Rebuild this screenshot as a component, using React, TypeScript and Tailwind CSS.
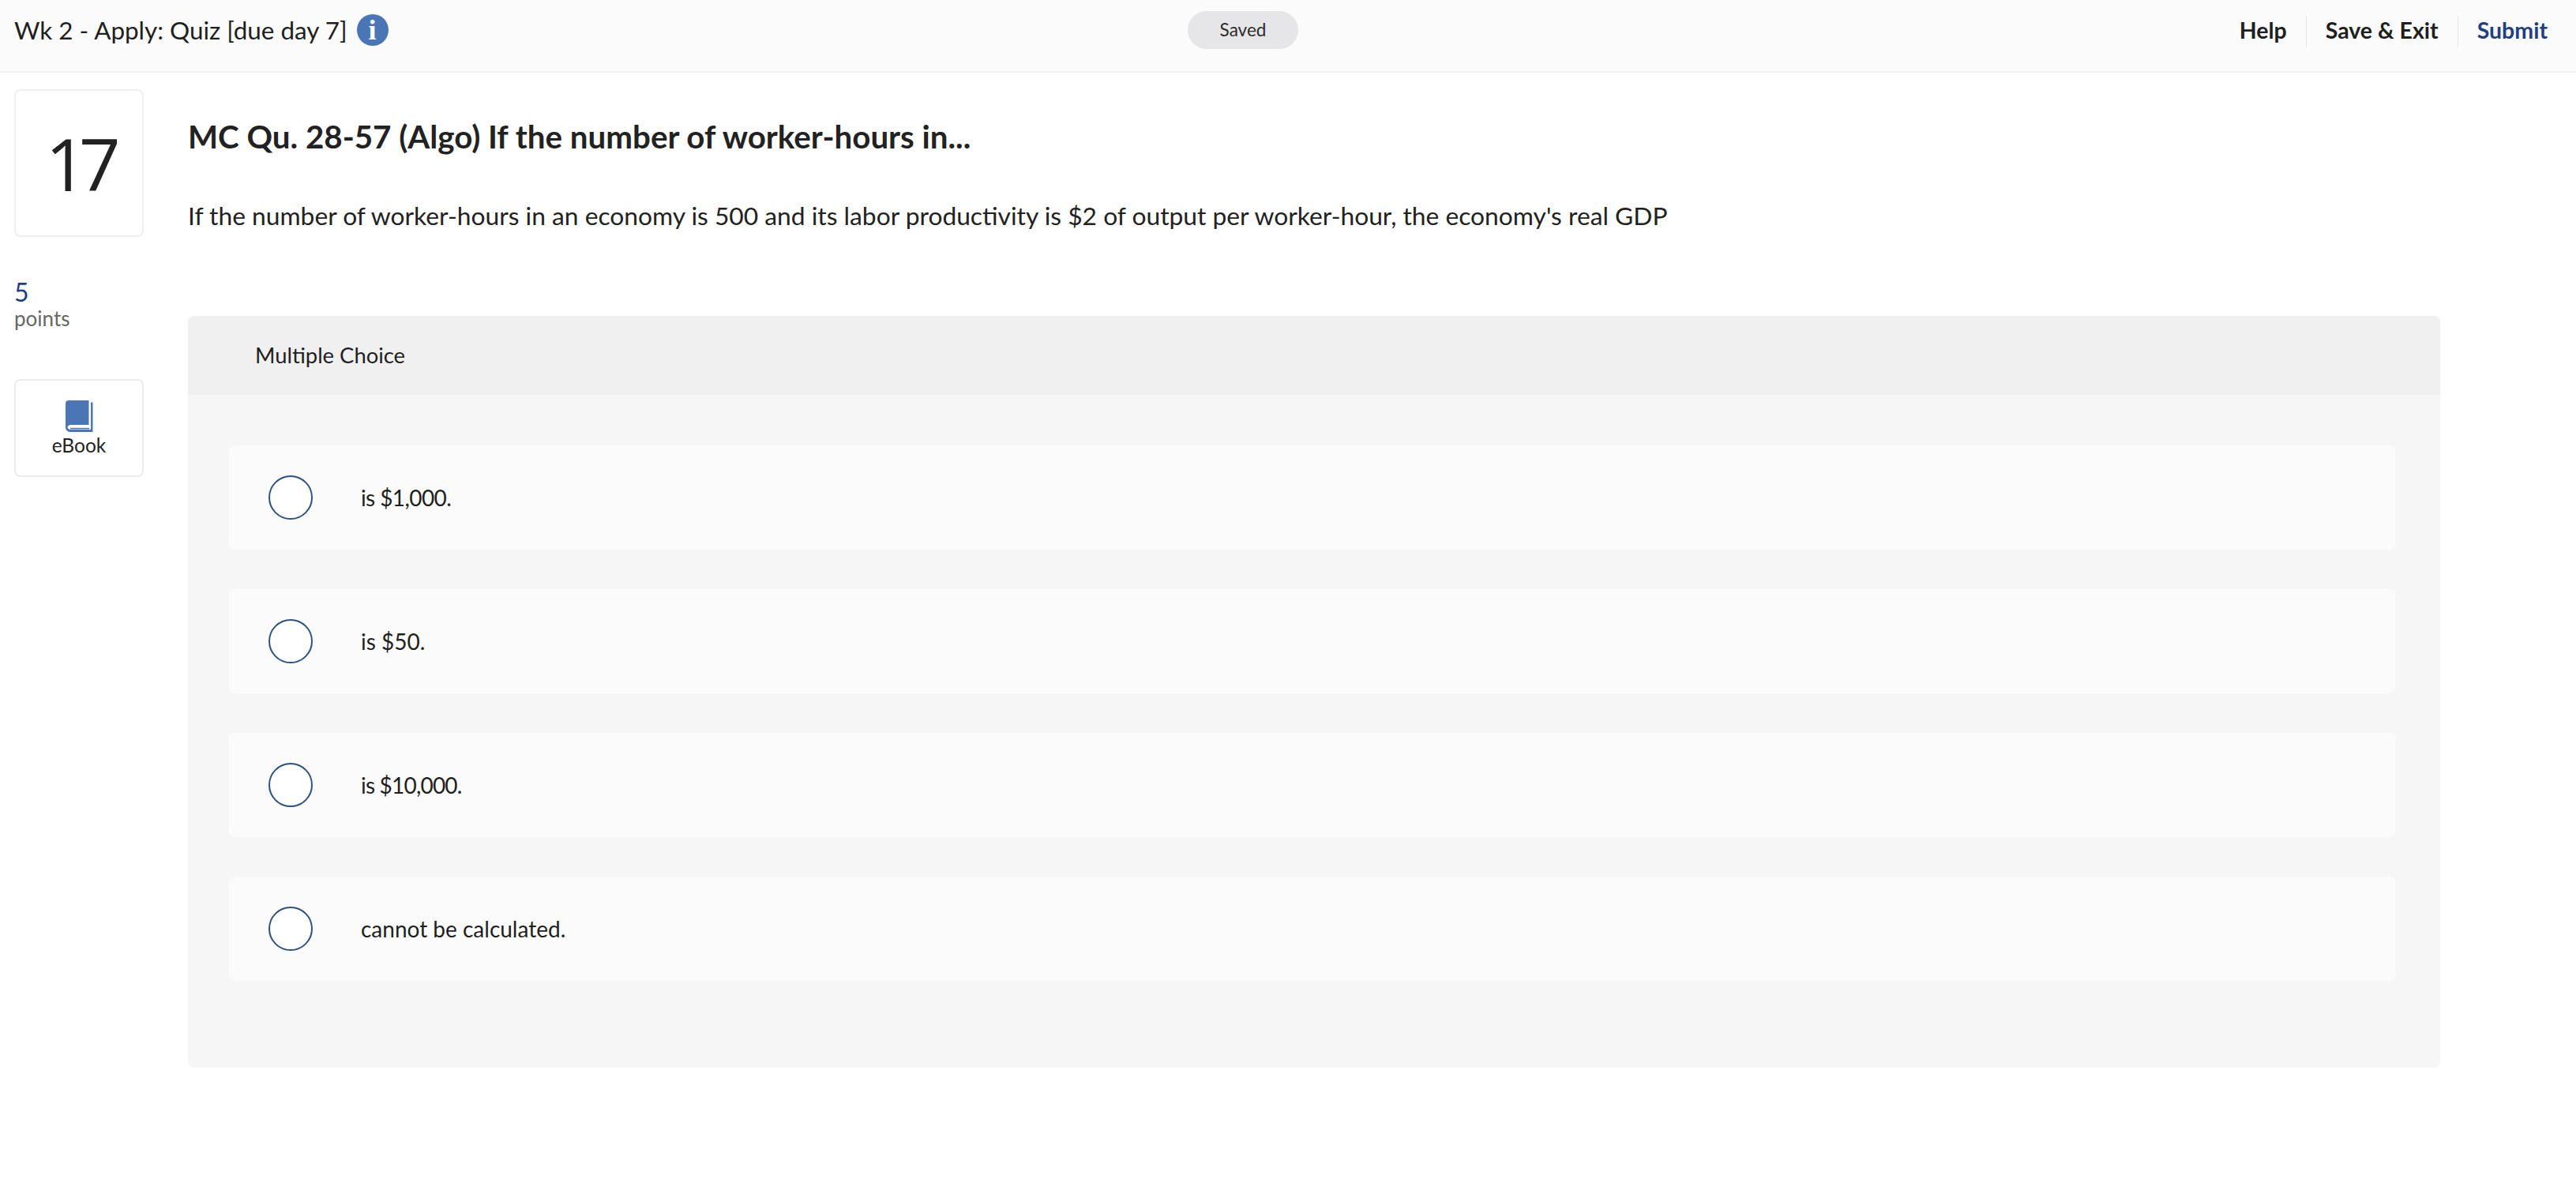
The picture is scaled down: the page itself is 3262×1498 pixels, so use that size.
const choices = [
  { text: "is $1,000.", spacing: "tracking-[-0.6px]" },
  { text: "is $50.", spacing: "tracking-normal" },
  { text: "is $10,000.", spacing: "tracking-[-0.8px]" },
  { text: "cannot be calculated.", spacing: "tracking-normal" },
];

const BookIcon = () => (
  <svg width="36" height="42" viewBox="0 0 36 42">
    <path d="M33 3.500h2.500V41H7.500C3.500 41 1 38.500 1 35V5C1 2.500 2.500 1 5 1h25.500v31H8c-3 0-4.500 1.500-4.500 3s1.500 3 4.500 3h25z" fill="#4a76b5" />
    <path d="M7 35.800h24v1.600H7z" fill="#4a76b5" />
  </svg>
);

const InfoIcon = () => (
  <span className="flex h-10 w-10 items-center justify-center rounded-full bg-[#4a76b5] font-['Liberation_Serif',serif] text-[36px] font-bold leading-none text-white">
    i
  </span>
);

const Header = () => (
  <header className="flex h-[92px] items-start border-b-2 border-[#f0f0f0] bg-[#fbfbfb] pl-[18px] pr-[36px]">
    <div className="mt-[18px] flex w-[1486px] items-center gap-3">
      <span className="text-[31.4px] leading-[38px] text-[#1f1f1f]">Wk 2 - Apply: Quiz [due day 7]</span>
      <InfoIcon />
    </div>
    <span className="mt-[14px] flex h-12 w-[140px] items-center justify-center rounded-full bg-[#e6e5e7] text-[22.500px] text-[#2b2b2b]">
      Saved
    </span>
    <nav className="ml-auto mt-5 flex h-10 items-center text-[28.500px] font-bold text-[#1f1f1f]">
      <span className="border-r border-[#e6e6e6] pb-[3px] pr-6 leading-[37px]">Help</span>
      <span className="border-r border-[#e6e6e6] px-6 pb-[3px] leading-[37px]">Save &amp; Exit</span>
      <span className="pb-[3px] pl-6 leading-[37px] text-[#1f3f7f]">Submit</span>
    </nav>
  </header>
);

const Sidebar = () => (
  <aside className="flex w-[238px] shrink-0 flex-col pl-[18px]">
    <div className="flex h-[187px] w-[164px] items-center justify-center rounded-lg border-2 border-[#efefef] font-['Open_Sans',sans-serif] text-[92px] font-medium leading-none tracking-[-10px] text-[#222222]">
      17
    </div>
    <div className="mt-[52px] text-[32px] leading-9 text-[#1f3f7f]">5</div>
    <div className="text-[26px] leading-[30px] text-[#666666]">points</div>
    <div className="mt-[62px] flex h-[124px] w-[164px] flex-col items-center rounded-lg border-2 border-[#ececec] pt-6">
      <BookIcon />
      <span className="text-[24.500px] leading-8 text-[#222222]">eBook</span>
    </div>
  </aside>
);

export default function App() {
  return (
    <div className="min-h-[1498px] bg-white font-['Lato',sans-serif]">
      <Header />
      <main className="flex pt-[21px]">
        <Sidebar />
        <section className="w-[2852px]">
          <h1 className="mt-[34px] text-[40.300px] font-bold leading-[52px] text-[#222222]">
            MC Qu. 28-57 (Algo) If the number of worker-hours in...
          </h1>
          <p className="mt-[54px] text-[31.750px] leading-10 text-[#222222]">
            If the number of worker-hours in an economy is 500 and its labor productivity is $2 of output per
            worker-hour, the economy's real GDP
          </p>
          <div className="mt-[107px] rounded-lg bg-[#f6f6f6] pb-[110px]">
            <div className="flex h-[100px] items-center rounded-t-lg bg-[#f0f0f0] pl-[85px] text-[27.400px] text-[#1f1f1f]">
              Multiple Choice
            </div>
            <div className="flex flex-col gap-[50px] px-[52px] pr-[56px] pt-16">
              {choices.map((choice) => (
                <div key={choice.text} className="flex h-[132px] items-center rounded-lg bg-[#fbfbfb] pl-[50px]">
                  <span className="h-[56px] w-[56px] rounded-full border-2 border-[#2c5282] bg-white" />
                  <span className={`ml-[61px] text-[28px] text-[#1f1f1f] ${choice.spacing}`}>{choice.text}</span>
                </div>
              ))}
            </div>
          </div>
        </section>
      </main>
    </div>
  );
}
